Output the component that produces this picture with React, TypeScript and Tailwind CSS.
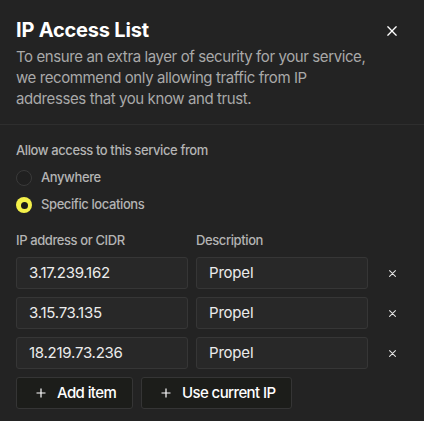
import { useState } from "react";

const rows = [
  { ip: "3.17.239.162", desc: "Propel" },
  { ip: "3.15.73.135", desc: "Propel" },
  { ip: "18.219.73.236", desc: "Propel" },
];

function CloseIcon({ size = 12, stroke = 2 }: { size?: number; stroke?: number }) {
  return (
    <svg width={size} height={size} viewBox="0 0 12 12" fill="none">
      <path d="M1 1L11 11M11 1L1 11" stroke="currentColor" strokeWidth={stroke} strokeLinecap="round" />
    </svg>
  );
}

function PlusIcon() {
  return (
    <svg width="10" height="10" viewBox="0 0 10 10" fill="none">
      <path d="M5 0.5V9.5M0.5 5H9.5" stroke="currentColor" strokeWidth="1.2" />
    </svg>
  );
}

export default function App() {
  const [mode, setMode] = useState("specific");

  return (
    <div
      className="min-h-screen w-full bg-[#232323] text-white"
      style={{ fontFamily: "Inter, 'Noto Sans', sans-serif" }}
    >
      <div className="flex items-start justify-between px-4 pt-[17px]">
        <h2 className="text-[20px] font-bold leading-[26px] tracking-[-0.2px]">IP Access List</h2>
        <button className="mr-[11px] mt-[9px] text-white">
          <CloseIcon size={10} stroke={1.6} />
        </button>
      </div>
      <p className="ml-4 mt-[3px] max-w-[352px] text-[15px] leading-[21px] tracking-[-0.4px] text-[#a9a9a9]">
        To ensure an extra layer of security for your service, we recommend only allowing traffic from IP
        addresses that you know and trust.
      </p>
      <div className="mt-[15px] h-px bg-[#2e2e2e]" />

      <div className="px-4 pt-[17px]">
        <div className="text-[13px] font-medium leading-4 tracking-[-0.4px] text-[#b4b4b4]">
          Allow access to this service from
        </div>
        <div className="mt-[12px] flex flex-col gap-[11px]">
          {[
            { id: "anywhere", label: "Anywhere" },
            { id: "specific", label: "Specific locations" },
          ].map((o) => (
            <label key={o.id} className="flex h-4 cursor-pointer items-center gap-[9px]" onClick={() => setMode(o.id)}>
              {mode === o.id ? (
                <span className="flex size-4 items-center justify-center rounded-full bg-[#f4f14a]">
                  <span className="size-[7px] rounded-full bg-[#1b1b1b]" />
                </span>
              ) : (
                <span className="size-4 rounded-full border border-[#3a3a3a] bg-[#202020]" />
              )}
              <span className="text-[13px] font-medium tracking-[-0.4px] text-[#b4b4b4]">{o.label}</span>
            </label>
          ))}
        </div>

        <div className="mt-[19px] flex gap-2 text-[13px] font-medium leading-4 tracking-[-0.4px] text-[#b4b4b4]">
          <div className="w-[172px]">IP address or CIDR</div>
          <div>Description</div>
        </div>

        <div className="mt-[9px] flex flex-col gap-2">
          {rows.map((r) => (
            <div key={r.ip} className="flex items-center gap-2">
              <div className="flex h-8 w-[172px] items-center rounded-[3px] border border-[#363636] bg-[#282828] px-[12px] text-[15px] tracking-[-0.25px] text-[#ececec]">
                {r.ip}
              </div>
              <div className="flex h-8 w-[172px] items-center rounded-[3px] border border-[#363636] bg-[#282828] px-[12px] text-[15px] tracking-[-0.2px] text-[#ececec]">
                {r.desc}
              </div>
              <button className="ml-[13px] text-[#e5e5e5]">
                <CloseIcon size={7} stroke={1.8} />
              </button>
            </div>
          ))}
        </div>

        <div className="mt-2 flex gap-2">
          <button className="flex h-8 w-[117px] items-center gap-[11px] rounded-[3px] border border-[#353535] bg-[#1c1d1a] pl-[19px] text-[15px] font-medium tracking-[-0.6px] text-white">
            <PlusIcon />
            Add item
          </button>
          <button className="flex h-8 w-[151px] items-center gap-[11px] rounded-[3px] border border-[#353535] bg-[#1c1d1a] pl-[19px] text-[15px] font-medium tracking-[-0.6px] text-white">
            <PlusIcon />
            Use current IP
          </button>
        </div>
      </div>
    </div>
  );
}
